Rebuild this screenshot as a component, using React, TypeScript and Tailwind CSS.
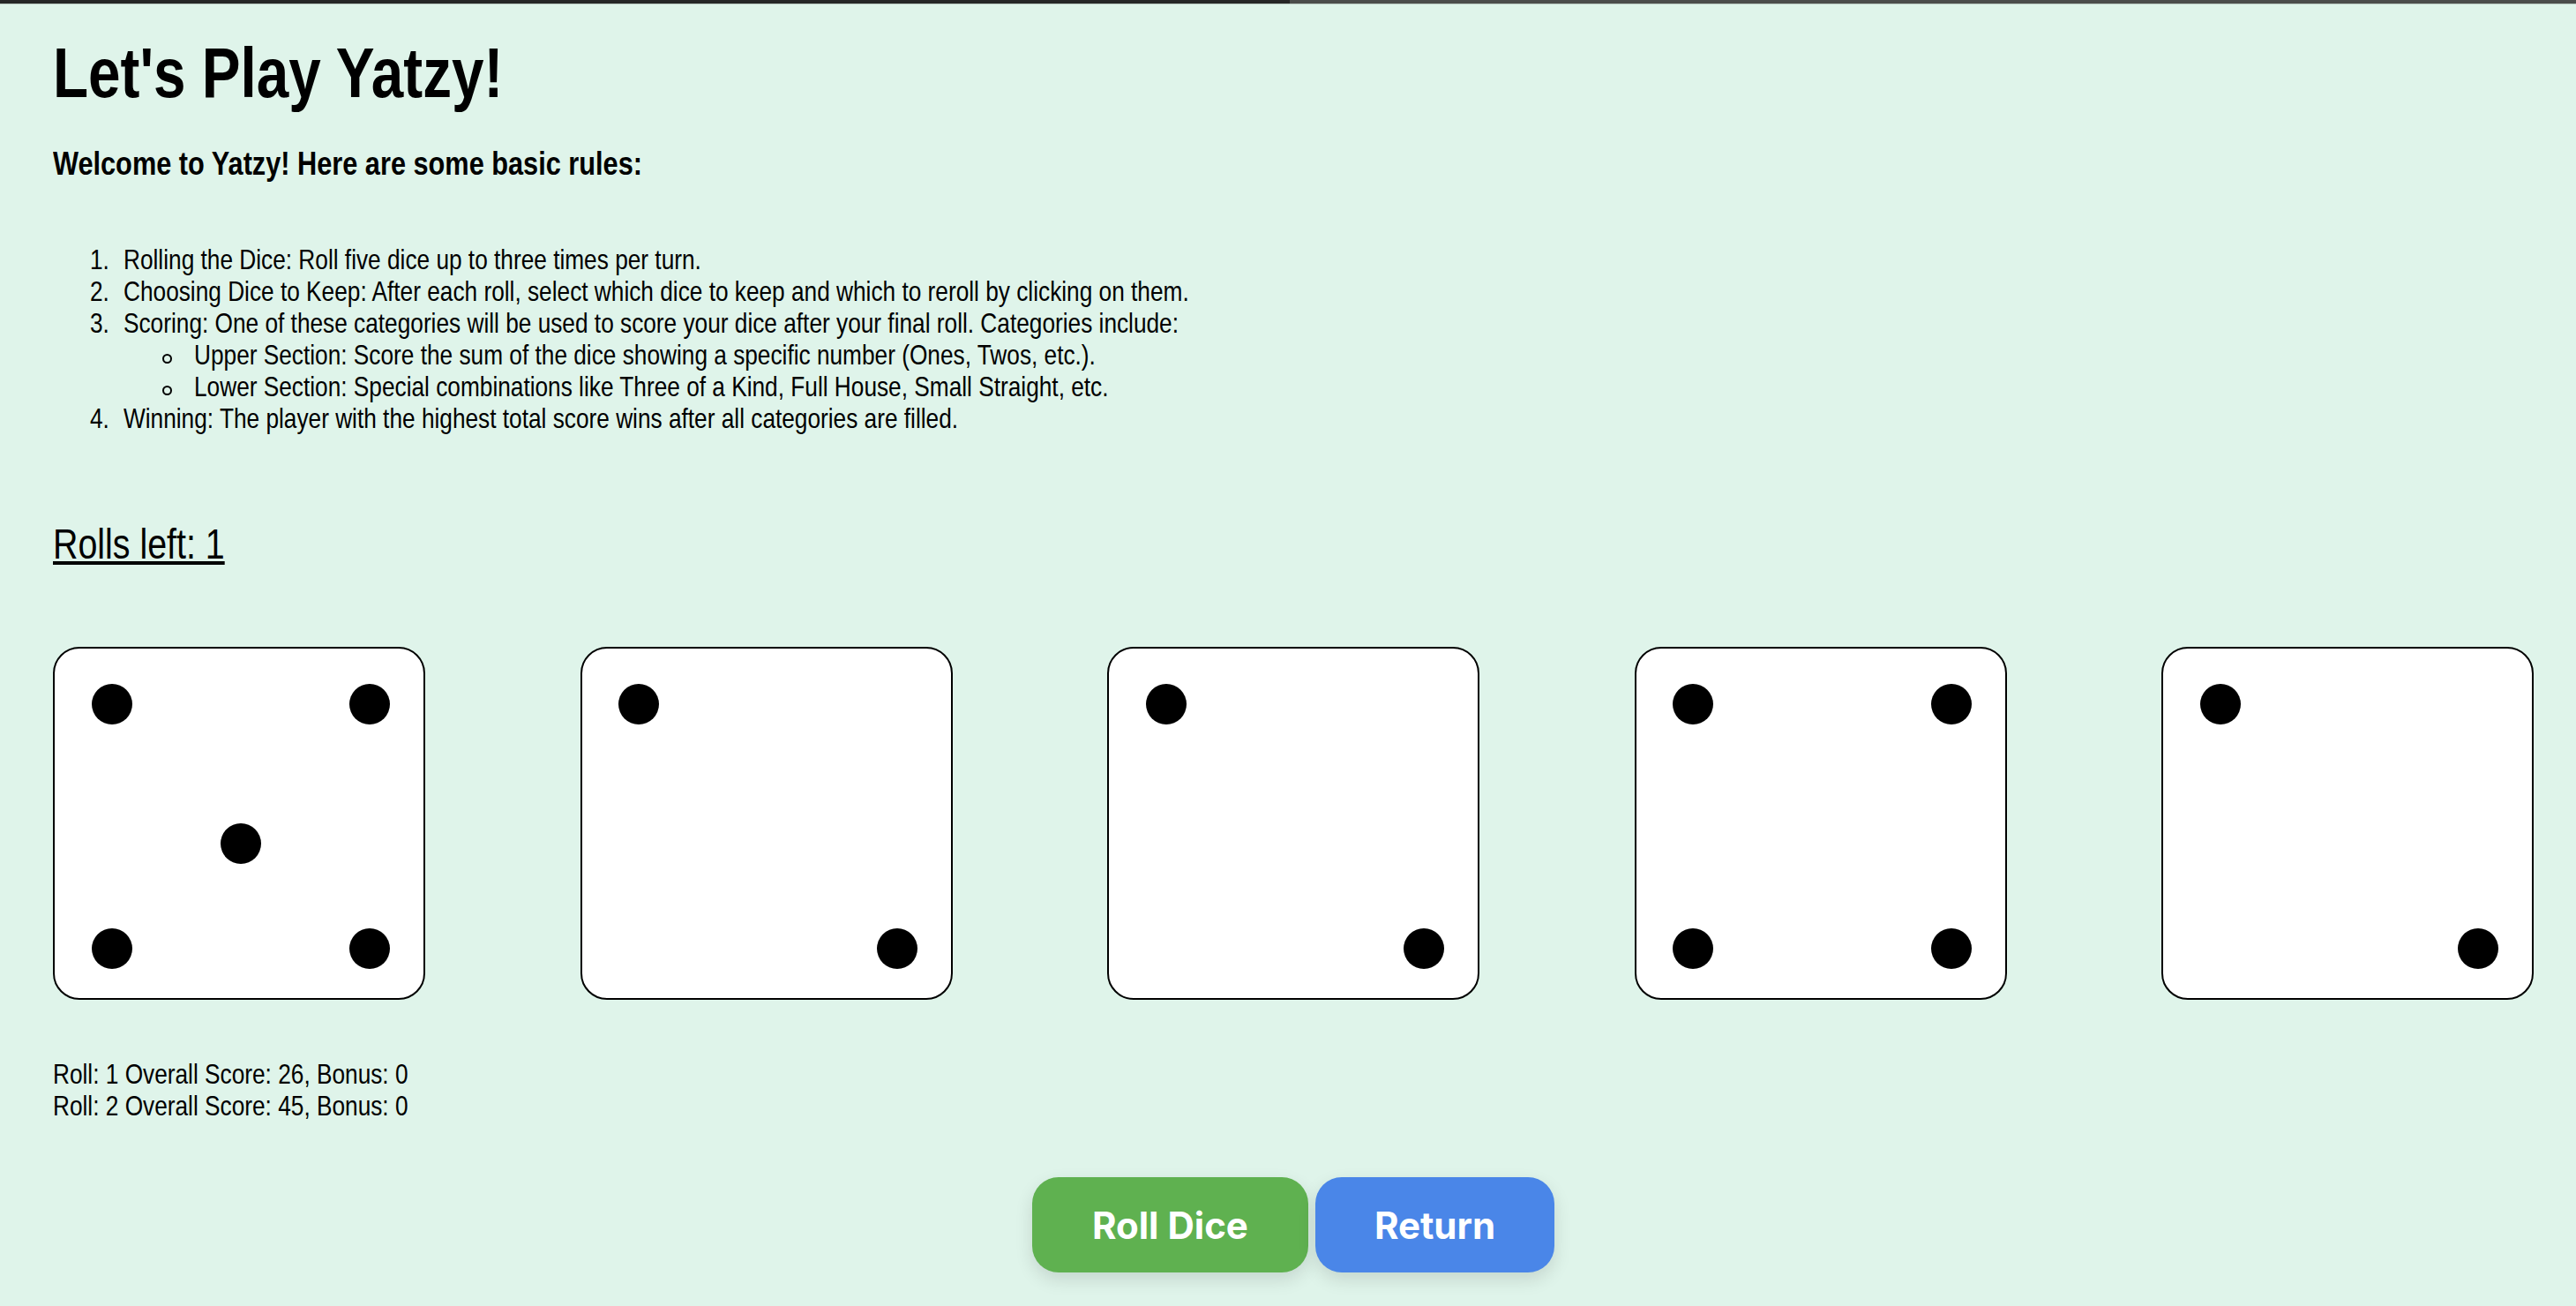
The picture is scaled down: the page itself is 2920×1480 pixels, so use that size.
import React from "react";

const SANS = { fontFamily: '"Liberation Sans Narrow","Arial Narrow","Liberation Sans",Arial,sans-serif' };

const faces: number[][][] = [
  [[10, 10], [80, 10], [45, 50], [10, 80], [80, 80]],
  [[10, 10], [80, 80]],
  [[10, 10], [80, 80]],
  [[10, 10], [80, 10], [10, 80], [80, 80]],
  [[10, 10], [80, 80]],
];

function pipClass(l: number, t: number) {
  const lc = l === 10 ? "left-[10%]" : l === 45 ? "left-[45%]" : "left-[80%]";
  const tc = t === 10 ? "top-[10%]" : t === 50 ? "top-[50%]" : "top-[80%]";
  return `absolute ${lc} ${tc} w-[46px] h-[46px] rounded-full bg-black`;
}

function Die({ pips }: { pips: number[][] }) {
  return (
    <div className="relative w-[422px] h-[400px] border-2 border-black rounded-[30px] bg-white box-border">
      {pips.map(([l, t], i) => (
        <div key={i} className={pipClass(l, t)} />
      ))}
    </div>
  );
}

function N({ children }: { children: React.ReactNode }) {
  return <span className="inline-block origin-left scale-x-[0.82] whitespace-nowrap">{children}</span>;
}

function Num({ n }: { n: number }) {
  return (
    <span className="w-[38px] shrink-0">
      <N>{n}.</N>
    </span>
  );
}

function Bullet() {
  return (
    <span className="w-[37px] shrink-0 flex items-start">
      <span className="mt-[17px] ml-[1px] w-[11px] h-[11px] rounded-full border-[2px] border-black box-border" />
    </span>
  );
}

export default function App() {
  return (
    <div className="min-h-[1480px] w-full bg-[#dff4ea] text-black" style={SANS}>
      <div className="flex h-[4px] w-full">
        <div className="w-[1462px] h-full bg-[#262626]" />
        <div className="flex-1 h-full bg-[#4b4d4b]" />
      </div>
      <div className="h-[1px] w-full bg-[#b9c9c1]" />

      <div className="pl-[60px] pr-[48px]">
        <h1 className="mt-[32px] text-[80px] leading-[92px] font-bold origin-left scale-x-[0.82] whitespace-nowrap">
          Let's Play Yatzy!
        </h1>
        <h3 className="mt-[35px] text-[37px] leading-[43px] font-bold origin-left scale-x-[0.83] whitespace-nowrap">
          Welcome to Yatzy! Here are some basic rules:
        </h3>

        <ol className="mt-[69px] pl-[42px] text-[32px] leading-[36px]">
          <li className="flex">
            <Num n={1} />
            <N>Rolling the Dice: Roll five dice up to three times per turn.</N>
          </li>
          <li className="flex">
            <Num n={2} />
            <N>Choosing Dice to Keep: After each roll, select which dice to keep and which to reroll by clicking on them.</N>
          </li>
          <li className="flex">
            <Num n={3} />
            <div>
              <N>Scoring: One of these categories will be used to score your dice after your final roll. Categories include:</N>
              <ul className="pl-[43px]">
                <li className="flex">
                  <Bullet />
                  <N>Upper Section: Score the sum of the dice showing a specific number (Ones, Twos, etc.).</N>
                </li>
                <li className="flex">
                  <Bullet />
                  <N>Lower Section: Special combinations like Three of a Kind, Full House, Small Straight, etc.</N>
                </li>
              </ul>
            </div>
          </li>
          <li className="flex">
            <Num n={4} />
            <N>Winning: The player with the highest total score wins after all categories are filled.</N>
          </li>
        </ol>

        <h2 className="mt-[97px] text-[48px] leading-[55px] font-normal underline origin-left scale-x-[0.82] whitespace-nowrap">
          Rolls left: 1
        </h2>

        <div className="mt-[89px] flex justify-between">
          {faces.map((p, i) => (
            <Die key={i} pips={p} />
          ))}
        </div>

        <div className="mt-[66px] text-[32px] leading-[36px]">
          <div>
            <N>Roll: 1 Overall Score: 26, Bonus: 0</N>
          </div>
          <div>
            <N>Roll: 2 Overall Score: 45, Bonus: 0</N>
          </div>
        </div>

        <div className="mt-[63px] flex justify-center gap-[8px]" style={{ fontFamily: "Inter, sans-serif" }}>
          <button className="h-[108px] px-[68px] rounded-[30px] bg-[#5fb150] text-white text-[42px] font-bold shadow-[0_8px_20px_rgba(0,0,0,0.12)]">
            Roll Dice
          </button>
          <button className="h-[108px] px-[67px] rounded-[30px] bg-[#4a86e8] text-white text-[42px] font-bold shadow-[0_8px_20px_rgba(0,0,0,0.12)]">
            Return
          </button>
        </div>
      </div>
    </div>
  );
}
